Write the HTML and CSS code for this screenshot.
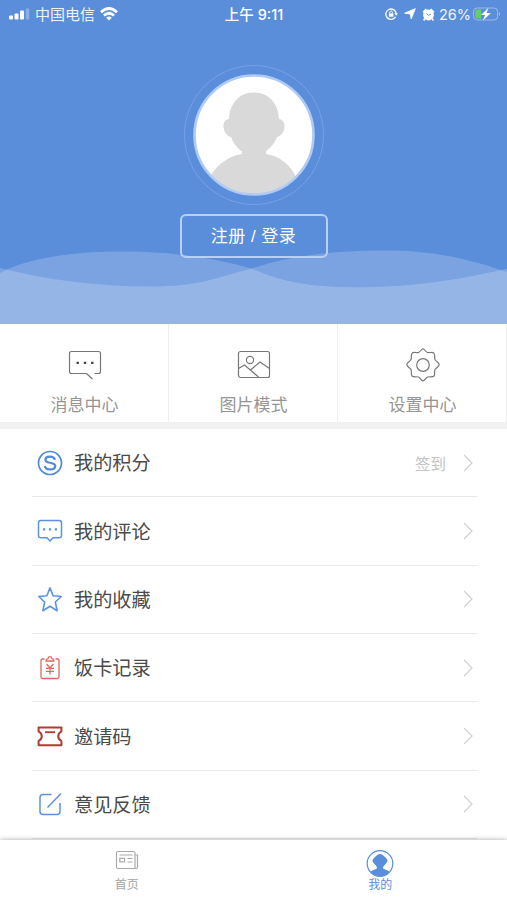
FILE: index.html
```html
<!DOCTYPE html>
<html lang="zh-CN">
<head>
  <meta charset="UTF-8" />
  <meta name="viewport" content="width=device-width, initial-scale=1" />
  <title>我的</title>
  <link rel="stylesheet" href="styles.css">
</head>
<body>

  <header class="hero">
    <div class="status-bar">
      <div class="status-left">
        <svg width="21" height="12" viewBox="0 0 21 12" fill="#fff">
          <rect x="0" y="7.6" width="4" height="3.8" rx="1"/>
          <rect x="5.5" y="5.600" width="4" height="5.800" rx="1"/>
          <rect x="11" y="2.600" width="4" height="8.800" rx="1"/>
          <rect x="16.7" y="0.5" width="3.6" height="10.900" rx="1" opacity=".3"/>
        </svg>
        <span class="carrier">中国电信</span>
        <svg class="wifi" width="18" height="14" viewBox="0 0 18 14" fill="none" stroke="#fff" stroke-width="2.7">
          <path d="M1 5.2Q9-2.2 17 5.2"/>
          <path d="M3.9 8.6Q9 3.9 14.1 8.6"/>
          <path d="M9 13.4L6.2 10.7Q9 8.2 11.8 10.7Z" fill="#fff" stroke="none"/>
        </svg>
      </div>
      <div class="status-time">上午 9:11</div>
      <div class="status-right">
        <svg width="13" height="12" viewBox="0 0 13 12" fill="none" stroke="#fff" stroke-width="1.3">
          <path d="M10.6 8.7A5.2 5.2 0 1 1 11.2 5.6"/>
          <path d="M9.4 5.2H13L11.2 7.7Z" fill="#fff" stroke="none"/>
          <rect x="3.8" y="5.3" width="4.6" height="3.4" fill="#fff" stroke="none"/>
          <path d="M4.8 5.5V4.3a1.3 1.3 0 0 1 2.6 0V5.5" stroke-width=".9"/>
        </svg>
        <svg width="12" height="12" viewBox="0 0 12 12" fill="#fff" stroke="#fff" stroke-width=".8" stroke-linejoin="round"><path d="M11.4.6L7.200 11L6.3 6L.6 5.2Z"/></svg>
        <svg width="13" height="13" viewBox="0 0 13 13" fill="#fff">
          <circle cx="6.5" cy="7" r="5.4"/>
          <path d="M.5 3.8L3.8.6L5.200 2L1.8 5.100ZM12.500 3.8L9.2.6L7.800 2L11.2 5.100Z"/>
          <path d="M2.8 10.5L1.7 12.5M10.2 10.5L11.3 12.5" stroke="#fff" stroke-width="1.6"/>
          <path d="M4.200 5.200L6.5 7.3L9 6" fill="none" stroke="#5a8dda" stroke-width=".9"/>
        </svg>
        <span class="percent">26%</span>
        <svg class="battery" width="28" height="14" viewBox="0 0 28 14">
          <rect x=".6" y="1" width="24" height="12" rx="3.6" fill="none" stroke="#fff" stroke-opacity=".4"/>
          <path d="M26 5Q28 7 26 9Z" fill="#fff" fill-opacity=".5"/>
          <path d="M4.5 2.6H8V11.4H4.5Q2.2 11.4 2.2 9V5Q2.2 2.6 4.5 2.6Z" fill="#62cf68"/>
          <path d="M15.5.7L8 8H12L9.8 13.4L18 6H13.6Z" fill="#fff"/>
        </svg>
      </div>
    </div>

    <svg class="waves" viewBox="0 0 507 85" preserveAspectRatio="none" fill="#fff">
      <path fill-opacity=".2" d="M0 34C28 19 72 12.500 122 12.500C180 12.500 222 21 253 30C287 45 315 48.200 362 48.200C412 48.200 465 40 507 29.500V85H0Z"/>
      <path fill-opacity=".2" d="M0 29C48 41 98 47.500 150 47.500C200 47.500 214 39 250 30C292 16 335 11.500 385 11.500C432 11.500 466 19 507 33V85H0Z"/>
    </svg>

    <div class="profile">
      <div class="avatar-ring">
        <svg class="avatar" viewBox="0 0 122 122">
          <defs><clipPath id="avatarClip"><circle cx="61" cy="61" r="59"/></clipPath></defs>
          <circle cx="61" cy="61" r="59" fill="#fff"/>
          <g fill="#d9d9d9" clip-path="url(#avatarClip)">
            <path d="M61 18.500C77 18.500 85.500 31 86 45C92 46 92.500 52 90.500 57C89 61 86 62.500 84 63C82 69 77 74 73 77.500V80C86 82 97 90 103 103V122H17V103C24 90 36 82 49 80V77.500C44 74 40 69 38 63C36 62.500 33 61 31.500 57C29.500 52 30 46 36 45C36.500 31 45 18.500 61 18.500Z"/>
          </g>
          <circle cx="61" cy="61" r="59.500" fill="none" stroke="#aecaf5" stroke-width="2.600"/>
        </svg>
      </div>
      <a class="login-btn">注册 / 登录</a>
    </div>
  </header>

  <nav class="shortcuts">
    <a class="shortcut">
      <svg width="34" height="34" viewBox="0 0 34 34" fill="none" stroke="#777" stroke-width="1.200">
        <path d="M18.500 25.500H3.500Q1.500 25.500 1.500 23.500V5.500Q1.500 3.500 3.500 3.500H30.500Q32.500 3.500 32.500 5.500V23.500Q32.500 25.500 30.500 25.500H26.500M18.500 25.500L24.500 31"/>
        <path d="M8.500 14.800h2.400M15.800 14.800h2.400M23.100 14.800h2.400" stroke="#444" stroke-width="2.200"/>
      </svg>
      <span>消息中心</span>
    </a>
    <a class="shortcut">
      <svg width="34" height="34" viewBox="0 0 34 34" fill="none" stroke="#777" stroke-width="1.200">
        <rect x="1.500" y="3.500" width="31" height="26" rx="2"/>
        <circle cx="13" cy="12" r="3.600"/>
        <path d="M1.500 20.500L7.500 17L21.500 29M13.500 22L23 14L32.500 20.500"/>
      </svg>
      <span>图片模式</span>
    </a>
    <a class="shortcut">
      <svg width="34" height="34" viewBox="0 0 34 34" fill="none" stroke="#777" stroke-width="1.200" stroke-linejoin="round">
        <path d="M17 .8C18.800.8 19.500 4.200 21.700 4.600C24 5 26.500 3.500 28 5.300C29.500 7 28 9.500 29 11.500C30 13.500 33.200 14.500 33.200 16.500C33.200 18.800 30 19.500 29 21.500C28 23.500 29.500 26.500 28 28C26.500 29.500 24 28.300 21.700 29C19.500 29.800 18.800 32.800 17 32.800C15.200 32.800 14.500 29.800 12.300 29C10 28.300 7.500 29.500 6 28C4.500 26.500 6 23.500 5 21.500C4 19.500.8 18.800.8 16.500C.8 14.500 4 13.500 5 11.500C6 9.500 4.500 7 6 5.300C7.500 3.500 10 5 12.300 4.600C14.500 4.200 15.200.8 17 .8Z"/>
        <circle cx="17" cy="17" r="6.300"/>
      </svg>
      <span>设置中心</span>
    </a>
  </nav>

  <main class="menu">
    <a class="menu-item">
      <svg class="menu-icon" viewBox="0 0 26 26" fill="none" stroke="#5089df">
        <circle cx="13" cy="13" r="11.500" stroke-width="1.700"/>
        <path d="M18 9.700C17.300 7.400 15.600 6.600 13 6.600C10.200 6.600 8.400 7.800 8.400 9.900C8.400 14 18.200 11.500 18.200 15.900C18.200 18.200 16.200 19.300 13.200 19.300C10.200 19.300 8.200 18.200 7.700 15.900" stroke-width="2.200"/>
      </svg>
      <span class="menu-text">我的积分</span>
      <span class="menu-note">签到</span>
      <svg class="arrow" viewBox="0 0 10 18"><path d="M1 1L9 9L1 17"/></svg>
    </a>
    <a class="menu-item">
      <svg class="menu-icon" viewBox="0 0 26 26" fill="none" stroke="#5b92e4" stroke-width="1.500" stroke-linejoin="round">
        <path d="M4 2.600H22Q24.500 2.600 24.500 5V17.500Q24.500 19.800 22 19.800H16L13 23L10 19.800H4Q1.500 19.800 1.500 17.500V5Q1.500 2.600 4 2.600Z"/>
        <path d="M6 11.400H8.200M11.900 11.400H14.100M17.800 11.400H20" stroke-width="2.200"/>
      </svg>
      <span class="menu-text">我的评论</span>
      <svg class="arrow" viewBox="0 0 10 18"><path d="M1 1L9 9L1 17"/></svg>
    </a>
    <a class="menu-item">
      <svg class="menu-icon" viewBox="0 0 26 26" fill="none" stroke="#5b92e4" stroke-width="1.600" stroke-linejoin="round">
        <path d="M13 1.900L16.100 9.800L24.300 10.500L18.300 16L20.100 24.700L13 20.300L5.900 24.700L7.700 16L1.700 10.500L9.900 9.800Z"/>
      </svg>
      <span class="menu-text">我的收藏</span>
      <svg class="arrow" viewBox="0 0 10 18"><path d="M1 1L9 9L1 17"/></svg>
    </a>
    <a class="menu-item">
      <svg class="menu-icon" viewBox="0 0 26 26" fill="none" stroke="#e2675f" stroke-width="1.300">
        <path d="M7.500 4H5.500Q4 4 4 5.500V22Q4 23.500 5.500 23.500H20.500Q22 23.500 22 22V5.500Q22 4 20.500 4H18.500"/>
        <path d="M9 6Q9 4 11 3.600Q11.500 1.700 13 1.700Q14.500 1.700 15 3.600Q17 4 17 6Z"/>
        <path d="M9.500 9L13 13L16.500 9M13 13V19.500M9 13.300H17M9 16.300H17"/>
      </svg>
      <span class="menu-text">饭卡记录</span>
      <svg class="arrow" viewBox="0 0 10 18"><path d="M1 1L9 9L1 17"/></svg>
    </a>
    <a class="menu-item">
      <svg class="menu-icon" viewBox="0 0 26 26" fill="none" stroke="#b33b32" stroke-width="2" stroke-linejoin="round">
        <path d="M1.600 4.500H24.400V8.400Q21.200 10.200 21.200 13.200Q21.200 16.200 24.400 18V22.200H1.600V18Q4.800 16.200 4.800 13.200Q4.800 10.200 1.600 8.400Z"/>
        <path d="M8 9.200H18" stroke-width="1.800"/>
      </svg>
      <span class="menu-text">邀请码</span>
      <svg class="arrow" viewBox="0 0 10 18"><path d="M1 1L9 9L1 17"/></svg>
    </a>
    <a class="menu-item">
      <svg class="menu-icon" viewBox="0 0 26 26" fill="none" stroke="#5b92e4" stroke-width="1.500">
        <path d="M14.500 3.500H6Q3 3.500 3 6.500V20.500Q3 23.500 6 23.500H20Q23 23.500 23 20.500V12"/>
        <path d="M10.500 16.500L24 2.500"/>
      </svg>
      <span class="menu-text">意见反馈</span>
      <svg class="arrow" viewBox="0 0 10 18"><path d="M1 1L9 9L1 17"/></svg>
    </a>
  </main>

  <footer class="tab-bar">
    <a class="tab">
      <svg width="24" height="27" viewBox="0 0 24 27" fill="none" stroke="#aaa" stroke-width="1.200">
        <path d="M20 18.500H3Q1.500 18.500 1.500 17V3Q1.500 1.500 3 1.500H18.500Q20 1.500 20 3V17Q20 18.500 21.300 18.500Q22.500 18.500 22.500 17V5H20"/>
        <path d="M4.500 5H17.500M12.500 8.500H17.500M12.500 12H17.500"/>
        <rect x="4.800" y="8.300" width="4.800" height="3.600"/>
      </svg>
      <span>首页</span>
    </a>
    <a class="tab active">
      <svg width="28" height="27" viewBox="0 0 28 27">
        <defs><clipPath id="tabClip"><circle cx="14" cy="13.500" r="12.800"/></clipPath></defs>
        <circle cx="14" cy="13.500" r="12.800" fill="#fff" stroke="#5a8dda" stroke-width="1.200"/>
        <path clip-path="url(#tabClip)" fill="#5a8dda" d="M14 4C16 4 17.500 5.500 19.800 7.700C22 9.800 22 11.500 20 13.500C18.500 15 17 16.500 17 18C17 19.500 21 19 24 22.500V27H4V22.500C7 19 11 19.500 11 18C11 16.500 9.500 15 8 13.500C6 11.500 6 9.800 8.200 7.700C10.500 5.500 12 4 14 4Z"/>
      </svg>
      <span>我的</span>
    </a>
  </footer>

</body>
</html>
```

FILE: styles.css
```css
* {
  box-sizing: border-box;
}
body {
  margin: 0;
  height: 900px;
  display: flex;
  flex-direction: column;
  overflow: hidden;
  background: #fff;
  font-family: "Liberation Sans", "Noto Sans CJK SC", sans-serif;
  color: #444;
}
svg {
  display: block;
  flex-shrink: 0;
}

/* Cabecera */
.hero {
  position: relative;
  height: 324px;
  flex-shrink: 0;
  background: #5a8dda;
  color: #fff;
}
.status-bar {
  display: grid;
  grid-template-columns: 1fr auto 1fr;
  align-items: center;
  height: 27px;
  padding: 0 6px 0 9px;
  font-size: 14px;
  line-height: 27px;
}
.status-left,
.status-right {
  display: flex;
  align-items: center;
}
.status-left {
  gap: 5px;
}
.carrier {
  padding-top: 1px;
  font-size: 15px;
  opacity: .9;
}
.wifi {
  margin-top: -1px;
}
.status-time {
  padding-right: 2px;
  font-family: Inter, "Noto Sans CJK SC", sans-serif;
  font-size: 14.5px;
  font-weight: 500;
}
.status-right {
  justify-content: flex-end;
  gap: 6px;
}
.percent {
  margin-left: -2px;
  font-family: Inter, sans-serif;
  font-size: 14.5px;
  opacity: .9;
}
.battery {
  margin-top: -1px;
  margin-left: -4px;
}
.waves {
  position: absolute;
  left: 0;
  bottom: 0;
  width: 100%;
  height: 85px;
}
.profile {
  position: relative;
  display: flex;
  flex-direction: column;
  align-items: center;
  padding-top: 38px;
}
.avatar-ring {
  width: 140px;
  height: 140px;
  padding: 8px;
  border: 1px solid #76a2e5;
  border-radius: 50%;
}
.avatar {
  width: 122px;
  height: 122px;
}
.login-btn {
  width: 148px;
  height: 44px;
  margin-top: 9px;
  border: 2px solid #b9d0f5;
  border-radius: 6px;
  font-size: 17px;
  line-height: 42px;
  letter-spacing: .5px;
  text-align: center;
}

/* Accesos */
.shortcuts {
  display: grid;
  grid-template-columns: repeat(3, 1fr);
  height: 105px;
  flex-shrink: 0;
  border-bottom: 7px solid #f1f1f1;
}
.shortcut {
  display: flex;
  flex-direction: column;
  align-items: center;
  padding: 24px 0 0 1px;
  border-right: 1px solid #eee;
  font-size: 17px;
  line-height: 24px;
  color: #959595;
}
.shortcut span {
  margin-top: 12px;
}

/* Menu */
.menu {
  flex: 1;
  min-height: 0;
  padding: 0 30px 0 32px;
  overflow: hidden;
}
.menu-item {
  display: flex;
  align-items: center;
  height: 68.35px;
  padding: 0 4px 0 5px;
  border-bottom: 1px solid #e9e9e9;
}
.menu-icon {
  width: 26px;
  height: 26px;
}
.menu-text {
  flex: 1;
  padding-top: 3px;
  margin-left: 11px;
  font-size: 19.2px;
  line-height: 28px;
  color: #4a4a4a;
}
.menu-note {
  margin-right: 17px;
  font-size: 15.5px;
  color: #c4c4c4;
}
.arrow {
  width: 10px;
  height: 18px;
  fill: none;
  stroke: #d0d0d0;
  stroke-width: 1.2;
}

/* Barra inferior */
.tab-bar {
  position: relative;
  display: grid;
  grid-template-columns: 1fr 1fr;
  height: 60px;
  flex-shrink: 0;
  background: #fff;
  box-shadow: 0 0 5px rgba(0, 0, 0, .35);
}
.tab {
  display: flex;
  flex-direction: column;
  align-items: center;
  padding-top: 10px;
  font-size: 12px;
  line-height: 16px;
  color: #a5a5a5;
}
.tab.active {
  color: #5a8dda;
}
```
